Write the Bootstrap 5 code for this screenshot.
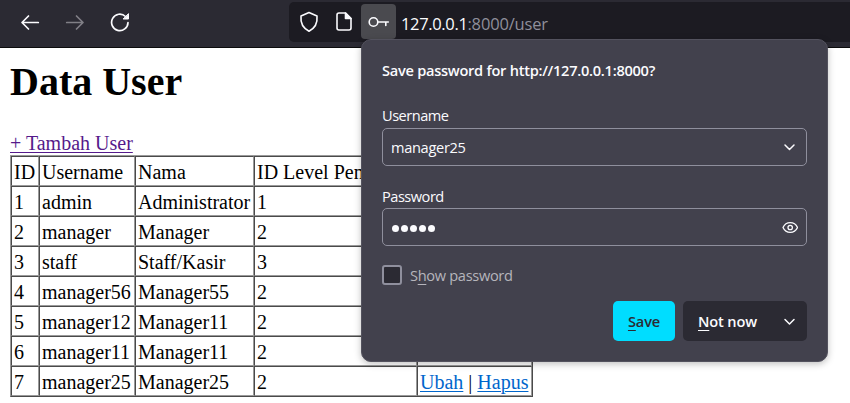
<!DOCTYPE html>
<html lang="id">
<head>
<meta charset="utf-8">
<meta name="viewport" content="width=device-width, initial-scale=1">
<title>Data User</title>
<link href="https://cdn.jsdelivr.net/npm/bootstrap@5.3.0/dist/css/bootstrap.min.css" rel="stylesheet">
<style>
body{width:850px;height:403px;overflow:hidden;background:#fff;color:#000;font-family:"Liberation Serif",serif;font-size:20px;line-height:23px}
.ui{font-family:"Open Sans","Noto Sans",sans-serif}
.toolbar{height:48px;background:#2b2a33;border-bottom:1px solid #0c0c0d}
.toolbar svg,.doorhanger svg{display:block;fill:none;stroke:#fbfbfe;stroke-linecap:round;stroke-linejoin:round}
.nav-tools{width:289px;padding:12px 0 0 20px}
.nav-tools svg{margin-right:25px}
.nav-tools .dim{stroke:#807f86}
.address{margin-top:2px;height:40px;background:#1c1b22;border-radius:5px 0 0 5px;color:#8f8f9b;font-size:16.5px}
.address .shield{margin:9px 0 0 10px}
.address .sheet{margin:9px 0 0 15px}
.key-box{width:35px;height:35px;background:#4a4a4f;border-radius:4px;margin:2px 5px 0 7px}
.url{line-height:40px;padding-top:2px;white-space:nowrap;letter-spacing:-.18px}
.url b{font-weight:400;color:#fbfbfe;letter-spacing:-.35px}
.content{padding:14px 10px 0}
h1{font-size:40px;font-weight:700;line-height:40px;margin:0 0 30px}
.visited{color:#551a8b}
.content a{text-underline-offset:2px;text-decoration-thickness:1px}
.users{width:523px;table-layout:fixed;border-collapse:separate;border-spacing:0;border:1px solid;border-color:#9a9a9a #4a4a4a #4a4a4a #9a9a9a}
.users td{height:30px;padding:2px 2px 0;border:1px solid;border-color:#4a4a4a #9a9a9a #9a9a9a #4a4a4a;white-space:nowrap;overflow:hidden;line-height:25px}
.users a{color:#06c}
.doorhanger{left:361px;top:39px;width:467px;height:323px;background:#42414d;border:1px solid #53525e;border-radius:10px;box-shadow:0 2px 7px rgba(0,0,0,.25);color:#fbfbfe;padding:19px 20px 0;font-size:14.6px;line-height:22px;letter-spacing:-.32px}
.ask{font-weight:600;font-size:14.6px;margin-bottom:23px;letter-spacing:-.27px}
.field{height:38px;border:1px solid #8f8f9d;border-radius:5px;padding:0 8px}
.lab{height:22px;letter-spacing:-.5px}
.lab-user{margin-bottom:2px}
.lab-pass{margin:19px 0 1px}
.dots{padding-top:2px}
.dots span{width:7px;height:7px;margin:0 1px;border-radius:50%;background:#fbfbfe}
.tick{width:20px;height:20px;background:#2b2a33;border:2px solid #8f8f9d;border-radius:3px;margin-right:8px}
.show{color:#b6b5bc;margin-top:18px;height:22px}
.doorhanger u{text-underline-offset:3px;text-decoration-thickness:1px}
.actions{margin-top:15px;gap:8px}
.actions .btn{height:40px;border:0;border-radius:5px;font-weight:600;font-size:14.6px;padding:0;line-height:40px;letter-spacing:-.15px}
.save{width:62px;background:#0df!important;color:#2b2a33!important}
.actions .later{width:124px;padding:0 8px 0 15px;background:#2b2a33!important;color:#fbfbfe!important}
</style>
<script src="https://cdn.jsdelivr.net/npm/bootstrap@5.3.0/dist/js/bootstrap.bundle.min.js"></script>
</head>
<body class="position-relative">
<header class="toolbar ui d-flex">
  <nav class="nav-tools d-flex flex-shrink-0">
    <svg width="20" height="20" stroke-width="1.7"><path d="M18.300 10.500H2.200M8.500 4l-6.500 6.500 6.500 6.500"/></svg>
    <svg class="dim" width="20" height="20" stroke-width="1.7"><path d="M1.700 10.500H17.800M11.500 4l6.500 6.500-6.500 6.500"/></svg>
    <svg width="20" height="20" stroke-width="1.7"><path d="M18 10.500A8.200 8.200 0 1 1 15.500 4.500"/><path d="M18.500 2v5h-5z" fill="#fbfbfe" stroke-width="1"/></svg>
  </nav>
  <div class="address d-flex flex-grow-1">
    <svg class="shield" width="20" height="22" stroke-width="1.6"><path d="M10 1.500 18 5c.7 7-2.200 12.200-8 15.200C4.200 17.200 1.300 12 2 5z"/></svg>
    <svg class="sheet" width="20" height="22" stroke-width="1.6"><path d="M5 2h6.500L17 7.500V17a2 2 0 0 1-2 2H5a2 2 0 0 1-2-2V4a2 2 0 0 1 2-2z"/><path d="M11.500 2v5.500H17z" fill="#fbfbfe"/></svg>
    <div class="key-box"><svg width="35" height="35" stroke-width="1.6"><circle cx="12.500" cy="18" r="4.300"/><path d="M17 18h10.300M24.800 18v3.500"/></svg></div>
    <div class="url"><b>127.0.0.1</b>:8000/user</div>
  </div>
</header>
<main class="content">
  <h1>Data User</h1>
  <a class="visited" href="#">+ Tambah User</a>
  <table class="users">
    <colgroup><col style="width:28px"><col style="width:96px"><col style="width:119px"><col style="width:163px"><col></colgroup>
    <tr><td>ID</td><td>Username</td><td>Nama</td><td>ID Level Pen</td><td></td></tr>
    <tr><td>1</td><td>admin</td><td>Administrator</td><td>1</td><td></td></tr>
    <tr><td>2</td><td>manager</td><td>Manager</td><td>2</td><td></td></tr>
    <tr><td>3</td><td>staff</td><td>Staff/Kasir</td><td>3</td><td></td></tr>
    <tr><td>4</td><td>manager56</td><td>Manager55</td><td>2</td><td></td></tr>
    <tr><td>5</td><td>manager12</td><td>Manager11</td><td>2</td><td></td></tr>
    <tr><td>6</td><td>manager11</td><td>Manager11</td><td>2</td><td></td></tr>
    <tr><td>7</td><td>manager25</td><td>Manager25</td><td>2</td><td><a href="#">Ubah</a> | <a href="#">Hapus</a></td></tr>
  </table>
</main>
<section class="doorhanger ui position-absolute">
  <div class="ask">Save password for http://127.0.0.1:8000?</div>
  <div class="lab lab-user">Username</div>
  <div class="field d-flex align-items-center justify-content-between">manager25<svg width="16" height="16" stroke-width="1.5"><path d="M3 6 7.500 10.500 12 6"/></svg></div>
  <div class="lab lab-pass">Password</div>
  <div class="field d-flex align-items-center justify-content-between"><div class="dots d-flex"><span></span><span></span><span></span><span></span><span></span></div><svg width="16" height="16" stroke-width="1.3"><path d="M1 8.500c3-6.500 11.500-6.500 14.500 0-3 6.500-11.500 6.500-14.500 0z"/><circle cx="8.200" cy="8.500" r="2.200"/></svg></div>
  <div class="show d-flex align-items-center"><span class="tick"></span><span>S<u>h</u>ow password</span></div>
  <div class="actions d-flex justify-content-end">
    <button class="btn save" type="button"><u>S</u>ave</button>
    <button class="btn later d-flex align-items-center justify-content-between" type="button"><span><u>N</u>ot now</span><svg width="18" height="16" stroke-width="1.5"><path d="M4 6.500 8.500 11 13 6.500"/></svg></button>
  </div>
</section>
</body>
</html>
